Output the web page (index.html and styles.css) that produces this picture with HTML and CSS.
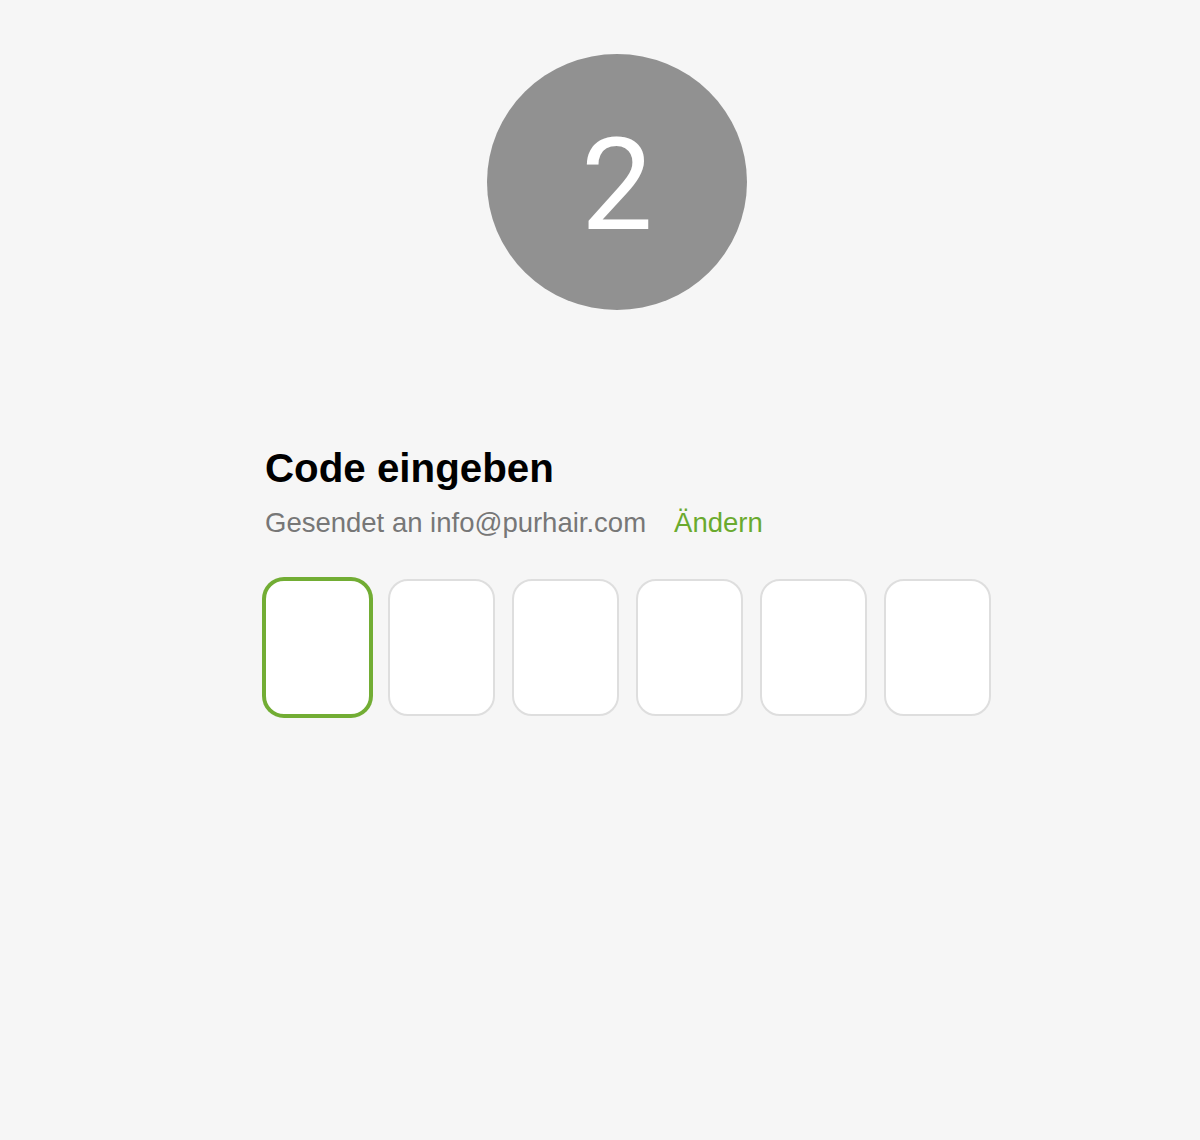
FILE: index.html
```html
<!DOCTYPE html>
<html lang="de">
<head>
<meta charset="utf-8">
<title>Code eingeben</title>
<link rel="stylesheet" href="styles.css">
</head>
<body>
<main class="page">
  <div class="step-badge"><span class="step-num">2</span></div>
  <section class="code-form">
    <h1 class="title">Code eingeben</h1>
    <p class="subtitle"><span class="sent">Gesendet an info@purhair.com</span><a class="change" href="#">Ändern</a></p>
    <div class="code-boxes">
      <div class="code-box focused"></div>
      <div class="code-box"></div>
      <div class="code-box"></div>
      <div class="code-box"></div>
      <div class="code-box"></div>
      <div class="code-box"></div>
    </div>
  </section>
</main>
</body>
</html>
```
FILE: styles.css
```css
html, body {
  margin: 0;
  padding: 0;
  background: #f6f6f6;
}
body {
  width: 1200px;
  height: 1140px;
  font-family: "Liberation Sans", Arial, sans-serif;
}
.page {
  padding: 54px 0 0 264px;
}
.step-badge {
  width: 260px;
  height: 256px;
  margin-left: 223px;
  border-radius: 50%;
  background: #919191;
  display: flex;
  align-items: center;
  justify-content: center;
}
.step-num {
  color: #ffffff;
  font-family: "Roboto", "Liberation Sans", sans-serif;
  font-weight: 400;
  font-size: 128px;
  line-height: 1;
  margin-top: 6px;
}
.code-form {
  margin-top: 135px;
}
.title {
  margin: 0 0 0 1px;
  font-size: 40.3px;
  line-height: 48px;
  font-weight: 700;
  color: #000000;
}
.subtitle {
  margin: 14px 0 0 1px;
  font-size: 27.5px;
  line-height: 32px;
  color: #777777;
  display: flex;
  gap: 28px;
}
.change {
  color: #6aaa2e;
  text-decoration: none;
}
.code-boxes {
  margin-top: 40px;
  display: flex;
  gap: 17px;
}
.code-box {
  width: 107px;
  height: 137px;
  box-sizing: border-box;
  background: #ffffff;
  border: 2px solid #dedede;
  border-radius: 20px;
}
.code-box.focused {
  border: 2px solid #72ad34;
  box-shadow: 0 0 0 2px #72ad34;
  border-radius: 20px;
}
```
